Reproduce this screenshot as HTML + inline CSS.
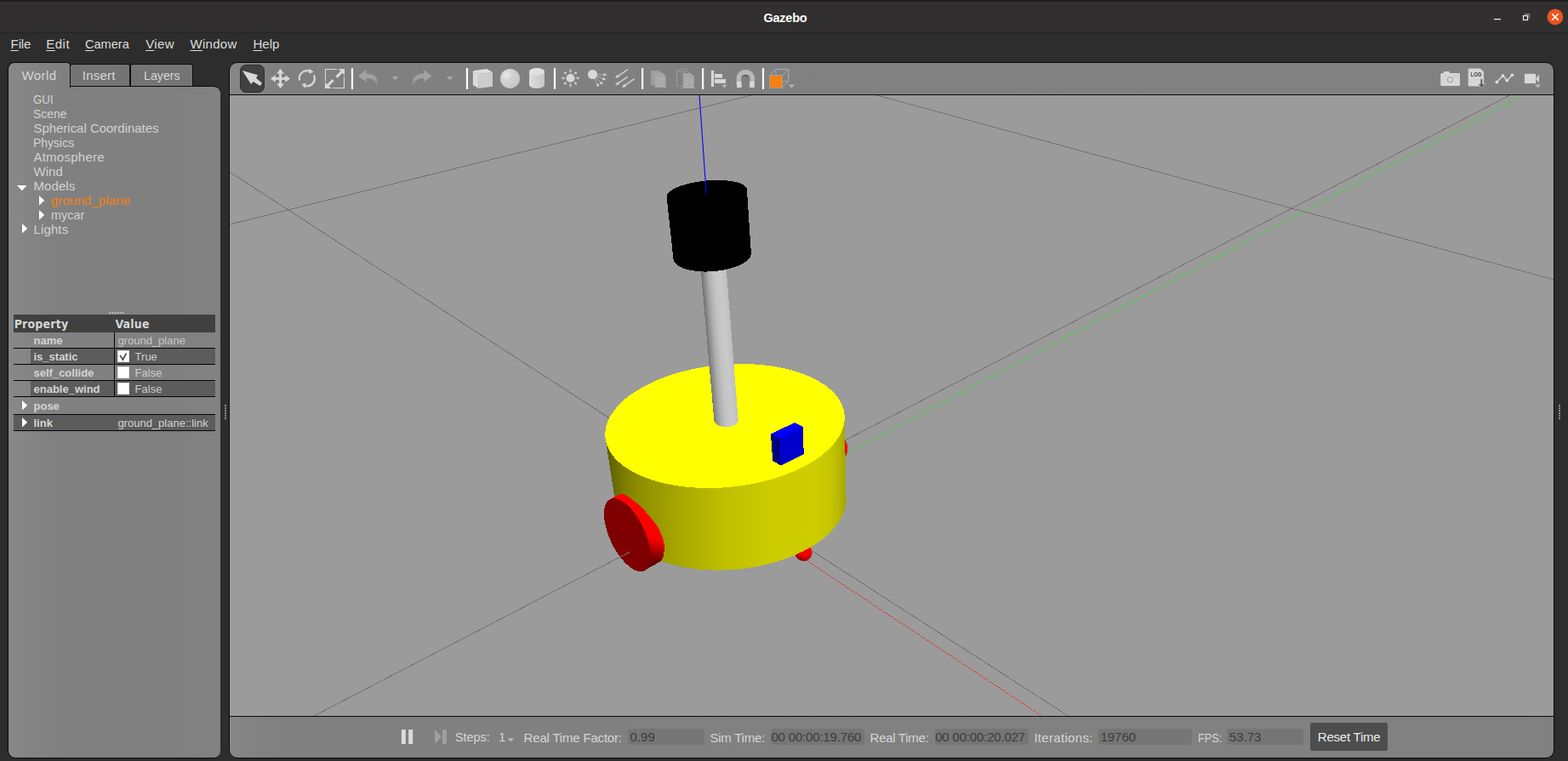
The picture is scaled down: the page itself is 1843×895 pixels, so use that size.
<!DOCTYPE html>
<html lang="en">
<head>
<meta charset="utf-8">
<title>Gazebo</title>
<style>
*{box-sizing:border-box;margin:0;padding:0}
html,body{width:1843px;height:895px;overflow:hidden;background:#2d2d2d}
body{position:relative;font-family:"Liberation Sans",sans-serif;font-size:15px;color:#d4d4d4}
.a{position:absolute;display:block}
.t{position:absolute;white-space:nowrap}
u{text-decoration:underline;text-underline-offset:1.5px;text-decoration-thickness:1px}
svg{overflow:visible}
</style>
</head>
<body>
<!-- window chrome -->
<div class="a" style="left:0px;top:0px;width:1843px;height:39px;background:#312f2f;border-top:2px solid #1e1e1e;border-bottom:1px solid #242424;"></div>
<div class="t" style="left:897.40px;top:12px;font-size:14.5px;line-height:18px;height:18px;color:#ffffff;font-weight:bold;letter-spacing:-0.215px;">Gazebo</div>
<svg class="a" style="left:1740px;top:2px" width="103" height="36" viewBox="1740 2 103 36">
<rect x="1756" y="22" width="8" height="1.2" fill="#f2f2f2"/>
<path d="M1792.5 16.5h5v5" fill="none" stroke="#9a9a9a" stroke-width="1"/>
<rect x="1790.5" y="18.5" width="5" height="5" fill="none" stroke="#f2f2f2" stroke-width="1.2"/>
<circle cx="1827.9" cy="19.9" r="9.4" fill="#e95420"/>
<path d="M1824.2 16.2l7.4 7.4M1831.6 16.2l-7.4 7.4" stroke="#fff" stroke-width="1.5" fill="none"/>
</svg>
<div class="t" style="left:12.60px;top:43px;font-size:15px;line-height:18px;height:18px;color:#dcdcdc;letter-spacing:-0.122px;"><u>F</u>ile</div>
<div class="t" style="left:54.30px;top:43px;font-size:15px;line-height:18px;height:18px;color:#dcdcdc;letter-spacing:0.485px;"><u>E</u>dit</div>
<div class="t" style="left:100.40px;top:43px;font-size:15px;line-height:18px;height:18px;color:#dcdcdc;transform:scaleX(0.9706);transform-origin:0 0;"><u>C</u>amera</div>
<div class="t" style="left:171.20px;top:43px;font-size:15px;line-height:18px;height:18px;color:#dcdcdc;letter-spacing:0.373px;"><u>V</u>iew</div>
<div class="t" style="left:223.40px;top:43px;font-size:15px;line-height:18px;height:18px;color:#dcdcdc;letter-spacing:0.323px;"><u>W</u>indow</div>
<div class="t" style="left:297.50px;top:43px;font-size:15px;line-height:18px;height:18px;color:#dcdcdc;letter-spacing:-0.018px;"><u>H</u>elp</div>
<div class="a" style="left:264px;top:476px;width:2px;height:2px;background:#8c8c8c;"></div>
<div class="a" style="left:264px;top:479px;width:2px;height:2px;background:#8c8c8c;"></div>
<div class="a" style="left:264px;top:482px;width:2px;height:2px;background:#8c8c8c;"></div>
<div class="a" style="left:264px;top:485px;width:2px;height:2px;background:#8c8c8c;"></div>
<div class="a" style="left:264px;top:488px;width:2px;height:2px;background:#8c8c8c;"></div>
<div class="a" style="left:264px;top:491px;width:2px;height:2px;background:#8c8c8c;"></div>
<div class="a" style="left:1832px;top:476px;width:2px;height:2px;background:#8c8c8c;"></div>
<div class="a" style="left:1832px;top:479px;width:2px;height:2px;background:#8c8c8c;"></div>
<div class="a" style="left:1832px;top:482px;width:2px;height:2px;background:#8c8c8c;"></div>
<div class="a" style="left:1832px;top:485px;width:2px;height:2px;background:#8c8c8c;"></div>
<div class="a" style="left:1832px;top:488px;width:2px;height:2px;background:#8c8c8c;"></div>
<div class="a" style="left:1832px;top:491px;width:2px;height:2px;background:#8c8c8c;"></div>
<!-- left panel -->
<div class="a" style="left:9px;top:101px;width:250px;height:791px;background:linear-gradient(90deg,#898989 0px,#858585 20px,#818181 45px,#808080 65px,#808080 200px,#828282 250px);border-left:1px solid #0c0c0c;border-bottom:1px solid #0c0c0c;border-top:1px solid #0c0c0c;border-radius:0 8px 8px 9px;"></div>
<div class="a" style="left:82px;top:75px;width:71px;height:27px;background:#747474;border:1px solid #0c0c0c;border-radius:3px 3px 0 0;"></div>
<div class="a" style="left:153px;top:75px;width:74px;height:27px;background:#747474;border:1px solid #0c0c0c;border-radius:3px 3px 0 0;"></div>
<div class="a" style="left:9px;top:73px;width:74px;height:30px;background:linear-gradient(90deg,#898989 0px,#858585 20px,#818181 45px,#808080 65px);border:1px solid #0c0c0c;border-bottom:none;border-radius:8px 4px 0 0;"></div>
<div class="t" style="left:25.50px;top:80px;font-size:15px;line-height:18px;height:18px;color:#d6d6d6;letter-spacing:0.401px;">World</div>
<div class="t" style="left:96.80px;top:80px;font-size:15px;line-height:18px;height:18px;color:#d6d6d6;letter-spacing:0.217px;">Insert</div>
<div class="t" style="left:168.70px;top:80px;font-size:15px;line-height:18px;height:18px;color:#d6d6d6;transform:scaleX(0.9486);transform-origin:0 0;">Layers</div>
<div class="t" style="left:39.40px;top:108px;font-size:15px;line-height:18px;height:18px;color:#d2d2d2;transform:scaleX(0.8849);transform-origin:0 0;">GUI</div>
<div class="t" style="left:39.40px;top:125px;font-size:15px;line-height:18px;height:18px;color:#d2d2d2;transform:scaleX(0.9265);transform-origin:0 0;">Scene</div>
<div class="t" style="left:39.40px;top:142px;font-size:15px;line-height:18px;height:18px;color:#d2d2d2;letter-spacing:-0.019px;">Spherical Coordinates</div>
<div class="t" style="left:39.40px;top:159px;font-size:15px;line-height:18px;height:18px;color:#d2d2d2;transform:scaleX(0.9328);transform-origin:0 0;">Physics</div>
<div class="t" style="left:39.40px;top:176px;font-size:15px;line-height:18px;height:18px;color:#d2d2d2;letter-spacing:0.258px;">Atmosphere</div>
<div class="t" style="left:39.40px;top:193px;font-size:15px;line-height:18px;height:18px;color:#d2d2d2;letter-spacing:0.077px;">Wind</div>
<div class="t" style="left:39.40px;top:210px;font-size:15px;line-height:18px;height:18px;color:#d2d2d2;letter-spacing:0.108px;">Models</div>
<div class="t" style="left:59.80px;top:227px;font-size:15px;line-height:18px;height:18px;color:#f58113;letter-spacing:0.140px;">ground_plane</div>
<div class="t" style="left:59.80px;top:244px;font-size:15px;line-height:18px;height:18px;color:#d2d2d2;transform:scaleX(0.9650);transform-origin:0 0;">mycar</div>
<div class="t" style="left:39.40px;top:261px;font-size:15px;line-height:18px;height:18px;color:#d2d2d2;letter-spacing:0.156px;">Lights</div>
<svg class="a" style="left:20.2px;top:217.8px" width="12.6" height="7.2"><polygon points="0,0 11.6,0 5.8,6.2" fill="#ffffff"/></svg>
<svg class="a" style="left:46px;top:229.5px" width="7.2" height="12.6"><polygon points="0,0 6.2,5.8 0,11.6" fill="#ffffff"/></svg>
<svg class="a" style="left:46px;top:246.5px" width="7.2" height="12.6"><polygon points="0,0 6.2,5.8 0,11.6" fill="#ffffff"/></svg>
<svg class="a" style="left:26px;top:263.3px" width="7.2" height="12.6"><polygon points="0,0 6.2,5.8 0,11.6" fill="#ffffff"/></svg>
<svg class="a" style="left:127px;top:366px" width="20" height="4" viewBox="127 366 20 4"><polygon points="128.80,367.1 130.40,367.1 129.70,368.9 128.10,368.9" fill="#c4c4c4"/><polygon points="131.88,367.1 133.48,367.1 132.78,368.9 131.18,368.9" fill="#c4c4c4"/><polygon points="134.96,367.1 136.56,367.1 135.86,368.9 134.26,368.9" fill="#c4c4c4"/><polygon points="138.04,367.1 139.64,367.1 138.94,368.9 137.34,368.9" fill="#c4c4c4"/><polygon points="141.12,367.1 142.72,367.1 142.02,368.9 140.42,368.9" fill="#c4c4c4"/><polygon points="144.20,367.1 145.80,367.1 145.10,368.9 143.50,368.9" fill="#c4c4c4"/></svg>
<div class="a" style="left:16px;top:370px;width:237px;height:21px;background:#404040;"></div>
<div class="t" style="left:16.70px;top:373px;font-size:14px;line-height:17px;height:17px;color:#d6d6d6;font-family:'DejaVu Sans Condensed','DejaVu Sans',sans-serif;font-weight:bold;letter-spacing:0.185px;">Property</div>
<div class="t" style="left:135.40px;top:373px;font-size:14px;line-height:17px;height:17px;color:#d6d6d6;font-family:'DejaVu Sans Condensed','DejaVu Sans',sans-serif;font-weight:bold;letter-spacing:0.197px;">Value</div>
<div class="a" style="left:36px;top:410px;width:217px;height:18px;background:#5c5c5c;"></div>
<div class="a" style="left:36px;top:448px;width:217px;height:18px;background:#5c5c5c;"></div>
<div class="a" style="left:16px;top:488px;width:237px;height:18px;background:#5c5c5c;"></div>
<div class="a" style="left:16px;top:409px;width:237px;height:1px;background:#050505;"></div>
<div class="a" style="left:16px;top:428px;width:237px;height:1px;background:#050505;"></div>
<div class="a" style="left:16px;top:447px;width:237px;height:1px;background:#050505;"></div>
<div class="a" style="left:16px;top:466px;width:237px;height:1px;background:#050505;"></div>
<div class="a" style="left:16px;top:487px;width:237px;height:1px;background:#050505;"></div>
<div class="a" style="left:16px;top:506px;width:237px;height:1px;background:#050505;"></div>
<div class="a" style="left:134px;top:391px;width:1px;height:75px;background:#050505;"></div>
<div class="t" style="left:39.50px;top:393px;font-size:13px;line-height:15px;height:15px;color:#d4d4d4;font-weight:bold;">name</div>
<div class="t" style="left:39.50px;top:412px;font-size:13px;line-height:15px;height:15px;color:#d4d4d4;font-weight:bold;">is_static</div>
<div class="t" style="left:39.50px;top:431px;font-size:13px;line-height:15px;height:15px;color:#d4d4d4;font-weight:bold;">self_collide</div>
<div class="t" style="left:39.50px;top:450px;font-size:13px;line-height:15px;height:15px;color:#d4d4d4;font-weight:bold;">enable_wind</div>
<div class="t" style="left:39.50px;top:470px;font-size:13px;line-height:15px;height:15px;color:#d4d4d4;font-weight:bold;">pose</div>
<div class="t" style="left:39.50px;top:490px;font-size:13px;line-height:15px;height:15px;color:#d4d4d4;font-weight:bold;">link</div>
<div class="t" style="left:138.40px;top:393px;font-size:13px;line-height:15px;height:15px;color:#c6c6c6;">ground_plane</div>
<div class="t" style="left:138.40px;top:490px;font-size:13px;line-height:15px;height:15px;color:#d2d2d2;">ground_plane::link</div>
<div class="a" style="left:138px;top:412px;width:14px;height:14px;background:#ffffff;border:1px solid #e0e0e0;"></div>
<div class="t" style="left:158.60px;top:412px;font-size:13px;line-height:15px;height:15px;color:#cccccc;">True</div>
<div class="a" style="left:138px;top:431px;width:14px;height:14px;background:#ffffff;border:1px solid #e0e0e0;"></div>
<div class="t" style="left:158.60px;top:431px;font-size:13px;line-height:15px;height:15px;color:#cccccc;">False</div>
<div class="a" style="left:138px;top:450px;width:14px;height:14px;background:#ffffff;border:1px solid #e0e0e0;"></div>
<div class="t" style="left:158.60px;top:450px;font-size:13px;line-height:15px;height:15px;color:#cccccc;">False</div>
<svg class="a" style="left:138px;top:412px" width="14" height="14"><path d="M3.1 5.9 L6.4 11 L10.5 3.4" fill="none" stroke="#4a4a4a" stroke-width="1.7"/></svg>
<svg class="a" style="left:26px;top:471.4px" width="7.2" height="12.6"><polygon points="0,0 6.2,5.8 0,11.6" fill="#ffffff"/></svg>
<svg class="a" style="left:26px;top:491.4px" width="7.2" height="12.6"><polygon points="0,0 6.2,5.8 0,11.6" fill="#ffffff"/></svg>
<!-- right panel -->
<div class="a" style="left:269px;top:73px;width:1558px;height:819px;background:linear-gradient(90deg,#878787 0px,#848484 18px,#818181 42px,#808080 65px,#818181 1558px);border:1px solid #0a0a0a;border-radius:10px;"></div>
<svg class="a" style="left:270px;top:74px" width="1556" height="37" viewBox="270 74 1556 37">
<defs>
<radialGradient id="gSph" cx="0.32" cy="0.32" r="0.75"><stop offset="0" stop-color="#ebebeb"/><stop offset="0.35" stop-color="#d4d4d4"/><stop offset="1" stop-color="#c4c4c4"/></radialGradient>
<linearGradient id="gCyl" x1="0" y1="0" x2="1" y2="0"><stop offset="0" stop-color="#e0e0e0"/><stop offset="0.5" stop-color="#d2d2d2"/><stop offset="1" stop-color="#c6c6c6"/></linearGradient>
<linearGradient id="gUndo" gradientUnits="userSpaceOnUse" x1="0" y1="92" x2="0" y2="102"><stop offset="0" stop-color="#a2a2a2"/><stop offset="1" stop-color="#a2a2a2" stop-opacity="0.1"/></linearGradient>
</defs>
<rect x="282.5" y="76.5" width="28" height="32" rx="6.5" fill="#414141" stroke="#2e2e2e" stroke-width="1"/>
<polygon points="284.9,82.9 303.1,88.3 301,91.8 308,97.7 305.7,101 297.7,96.1 295.1,99.1" fill="#d8d8d8"/>
<g fill="#d8d8d8"><rect x="328.1" y="84.45" width="2.8" height="16"/><rect x="321.5" y="91.05" width="16" height="2.8"/><polygon points="329.5,80.85000000000001 333.8,86.75 325.2,86.75"/><polygon points="329.5,104.05 333.8,98.15 325.2,98.15"/><polygon points="317.9,92.45 323.8,88.15 323.8,96.75"/><polygon points="341.1,92.45 335.2,88.15 335.2,96.75"/></g>
<g fill="#7b7b7b"><rect x="323.9" y="87.15" width="3.6" height="3.3"/><rect x="331.5" y="87.15" width="3.6" height="3.3"/><rect x="323.9" y="94.45" width="3.6" height="3.3"/><rect x="331.5" y="94.45" width="3.6" height="3.3"/></g>
<path d="M352.11 94.53 A9.0 9.0 0 0 1 363.13 83.51" fill="none" stroke="#d8d8d8" stroke-width="2.2"/>
<polygon points="368.6,84.4 363,80.4 363.3,86.7" fill="#d8d8d8"/>
<path d="M368.96 88.40 A9.0 9.0 0 0 1 359.08 101.03" fill="none" stroke="#d8d8d8" stroke-width="2.2"/>
<polygon points="354.8,98.7 359.8,97.7 358.4,103.9" fill="#d8d8d8"/>
<path d="M396 81.5 H382.5 V95.5 M391 103.5 H404.5 V90" fill="none" stroke="#d8d8d8" stroke-width="1.1"/>
<g fill="#d8d8d8"><polygon points="405,80.9 405,88.6 397.8,80.9"/><polygon points="381.9,104 381.9,96.4 389.4,104"/><polygon points="394.3,89.6 400.5,83.4 402.6,85.5 396.6,91.9"/><polygon points="392.7,95.2 386.4,101.6 384.3,99.5 390.4,93.0"/></g>
<rect x="412.9" y="80.2" width="2.2" height="24.7" fill="#ffffff"/>
<polygon points="421,89.3 430.4,82 430.4,96.2" fill="#a2a2a2"/>
<path d="M430 86.6 C437.5 86.4 443.5 90 443.8 96.5 C443.9 99 443.4 100.8 442.6 102.2 C442.6 96.6 439 91.6 430 91.9 Z" fill="url(#gUndo)"/>
<polygon points="460.7,90.1 468.1,90.1 464.4,94.19999999999999" fill="#a8a8a8"/>
<polygon points="507.7,89.3 498.3,82 498.3,96.2" fill="#a2a2a2"/>
<path d="M498.7 86.6 C491.2 86.4 485.2 90 484.9 96.5 C484.8 99 485.3 100.8 486.1 102.2 C486.1 96.6 489.7 91.6 498.7 91.9 Z" fill="url(#gUndo)"/>
<polygon points="524.8,90.1 532.2,90.1 528.5,94.19999999999999" fill="#a8a8a8"/>
<rect x="547.9" y="80.2" width="2.2" height="24.7" fill="#ffffff"/>
<polygon points="555.9,83.3 572.1,80.9 579,84.9 563,87" fill="#dfdfdf"/><polygon points="555.9,83.3 563,87 562.4,103.9 555.9,100" fill="#dadada"/><polygon points="563,87 579,84.9 579,101.8 562.4,103.9" fill="#cdcdcf"/>
<circle cx="599.5" cy="92.4" r="11.5" fill="url(#gSph)"/>
<path d="M622.1 84.2 V99.9 A8.95 4.1 0 0 0 640 99.9 V84.2 Z" fill="url(#gCyl)"/><ellipse cx="631.05" cy="84.2" rx="8.95" ry="4.1" fill="#e1e1e3"/>
<rect x="650.9" y="80.2" width="2.2" height="24.7" fill="#ffffff"/>
<circle cx="670.5" cy="91.9" r="4.9" fill="#d8d8d8"/>
<line x1="675.50" y1="91.90" x2="678.50" y2="91.90" stroke="#b4b4b4" stroke-width="0.8"/><polygon points="681.70,91.90 678.10,93.70 678.10,90.10" fill="#d0d0d0"/>
<line x1="674.04" y1="95.44" x2="676.16" y2="97.56" stroke="#b4b4b4" stroke-width="0.8"/><polygon points="678.42,99.82 674.60,98.55 677.15,96.00" fill="#d0d0d0"/>
<line x1="670.50" y1="96.90" x2="670.50" y2="99.90" stroke="#b4b4b4" stroke-width="0.8"/><polygon points="670.50,103.10 668.70,99.50 672.30,99.50" fill="#d0d0d0"/>
<line x1="666.96" y1="95.44" x2="664.84" y2="97.56" stroke="#b4b4b4" stroke-width="0.8"/><polygon points="662.58,99.82 663.85,96.00 666.40,98.55" fill="#d0d0d0"/>
<line x1="665.50" y1="91.90" x2="662.50" y2="91.90" stroke="#b4b4b4" stroke-width="0.8"/><polygon points="659.30,91.90 662.90,90.10 662.90,93.70" fill="#d0d0d0"/>
<line x1="666.96" y1="88.36" x2="664.84" y2="86.24" stroke="#b4b4b4" stroke-width="0.8"/><polygon points="662.58,83.98 666.40,85.25 663.85,87.80" fill="#d0d0d0"/>
<line x1="670.50" y1="86.90" x2="670.50" y2="83.90" stroke="#b4b4b4" stroke-width="0.8"/><polygon points="670.50,80.70 672.30,84.30 668.70,84.30" fill="#d0d0d0"/>
<line x1="674.04" y1="88.36" x2="676.16" y2="86.24" stroke="#b4b4b4" stroke-width="0.8"/><polygon points="678.42,83.98 677.15,87.80 674.60,85.25" fill="#d0d0d0"/>
<line x1="696.5" y1="87.5" x2="711.10" y2="87.93" stroke="#c0c0c0" stroke-width="0.8"/><polygon points="713.60,88.00 709.55,89.78 709.66,85.98" fill="#d4d4d4"/>
<line x1="696.5" y1="87.5" x2="709.88" y2="92.96" stroke="#c0c0c0" stroke-width="0.8"/><polygon points="712.20,93.90 707.78,94.15 709.21,90.63" fill="#d4d4d4"/>
<line x1="696.5" y1="87.5" x2="707.02" y2="97.85" stroke="#c0c0c0" stroke-width="0.8"/><polygon points="708.80,99.60 704.62,98.15 707.28,95.44" fill="#d4d4d4"/>
<line x1="696.5" y1="87.5" x2="702.71" y2="100.35" stroke="#c0c0c0" stroke-width="0.8"/><polygon points="703.80,102.60 700.35,99.83 703.77,98.17" fill="#d4d4d4"/>
<circle cx="696.5" cy="87.5" r="5.6" fill="#d8d8d8"/>
<line x1="737.7" y1="81.8" x2="725.48" y2="90.11" stroke="#d0d0d0" stroke-width="1.5"/><polygon points="723.00,91.80 725.62,87.48 727.98,90.95" fill="#d0d0d0"/>
<line x1="737.7" y1="90.3" x2="725.49" y2="98.52" stroke="#d0d0d0" stroke-width="1.5"/><polygon points="723.00,100.20 725.64,95.89 727.99,99.37" fill="#d0d0d0"/>
<line x1="745.8" y1="92.7" x2="733.47" y2="101.20" stroke="#d0d0d0" stroke-width="1.5"/><polygon points="731.00,102.90 733.60,98.56 735.98,102.02" fill="#d0d0d0"/>
<rect x="754.0" y="80.2" width="2.2" height="24.7" fill="#ffffff"/>
<g fill="#a2a2a2"><polygon points="764.9,82.9 774.6,82.9 778.5,86.5 778.5,100.3 764.9,100.3" fill="#9c9c9c"/><polygon points="769.5,85.7 778.6,85.7 782.6,89.6 782.6,103 769.5,103" fill="#a6a6a6"/></g>
<g stroke="#b6b6b6" stroke-width="0.5"><line x1="770.5" y1="91.5" x2="781.6" y2="91.5"/><line x1="770.5" y1="93.5" x2="781.6" y2="93.5"/><line x1="770.5" y1="95.5" x2="781.6" y2="95.5"/><line x1="770.5" y1="97.5" x2="781.6" y2="97.5"/><line x1="770.5" y1="99.5" x2="781.6" y2="99.5"/><line x1="770.5" y1="101.5" x2="781.6" y2="101.5"/></g>
<rect x="795.6" y="82.9" width="13.8" height="18.6" rx="1.6" fill="none" stroke="#a2a2a2" stroke-width="0.9"/><rect x="798.6" y="81.3" width="8.2" height="3.2" rx="1.5" fill="#808080" stroke="#a2a2a2" stroke-width="0.9"/>
<polygon points="802.7,85.9 811.8,85.9 815.9,89.9 815.9,104 802.7,104" fill="#a6a6a6"/>
<g stroke="#b6b6b6" stroke-width="0.5"><line x1="803.7" y1="92.5" x2="814.9" y2="92.5"/><line x1="803.7" y1="94.5" x2="814.9" y2="94.5"/><line x1="803.7" y1="96.5" x2="814.9" y2="96.5"/><line x1="803.7" y1="98.5" x2="814.9" y2="98.5"/><line x1="803.7" y1="100.5" x2="814.9" y2="100.5"/><line x1="803.7" y1="102.5" x2="814.9" y2="102.5"/></g>
<rect x="825.0" y="80.2" width="2.2" height="24.7" fill="#ffffff"/>
<g fill="#d8d8d8"><rect x="835.9" y="82.9" width="3.1" height="19.1"/><rect x="839.9" y="87" width="9.1" height="4.6"/><rect x="839.9" y="93.1" width="13.2" height="4.8"/></g>
<polygon points="847.7,99.6 855.1,99.6 851.4,103.5" fill="#b4b4b4"/>
<path d="M869.2 102.9 C868.6 99.5 868.3 96 868.3 92.7 A8.05 8.05 0 0 1 884.4 92.7 C884.4 96 884.1 99.5 883.6 102.9" fill="none" stroke="#b8b8b8" stroke-width="5.5"/>
<path d="M869.2 102.9 C868.9 100.6 868.6 98.2 868.45 95.9 M884.25 95.9 C884.1 98.2 883.9 100.6 883.6 102.9" fill="none" stroke="#d8d8d8" stroke-width="5.5"/>
<path d="M871.9 89.9 C873.6 88.2 879.1 88.2 880.8 89.9 C879 89.2 873.7 89.2 871.9 89.9 Z" fill="#4a4a4a" stroke="#5a5a5a" stroke-width="0.5"/>
<rect x="895.9" y="80.2" width="2.2" height="24.7" fill="#ffffff"/>
<g fill="none" stroke="#bdbdbd" stroke-width="0.8"><path d="M911.9 81.4 H925.4 Q926.8 81.4 926.8 82.8 V95.7 M904.9 88.6 L911.9 81.4 M919.3 88.6 L926.6 81.6 M919.3 102.8 L926.8 95.7"/><path d="M911.9 81.4 V88.5 M919.5 95.7 H926.8" stroke="#9a9a9a" stroke-width="1.4"/></g>
<rect x="904.8" y="88.8" width="14.4" height="14.2" fill="#f58113"/><rect x="904.4" y="88.4" width="15.2" height="15" fill="none" stroke="#a9b4bf" stroke-width="0.6"/>
<polygon points="926.7,99.4 934.1,99.4 930.4,103.5" fill="#b4b4b4"/>
<rect x="1693.2" y="85.9" width="22.8" height="15" rx="1.6" fill="#d6d6d6"/><rect x="1696.9" y="84" width="6.7" height="3" rx="0.8" fill="#d6d6d6"/>
<circle cx="1704.4" cy="93.7" r="3.1" fill="#dadada" stroke="#8c8c8c" stroke-width="0.9"/><rect x="1709.2" y="88.5" width="4.6" height="2" fill="#dcdcdc" stroke="#bcbcbc" stroke-width="0.5"/><circle cx="1699.2" cy="89.2" r="0.7" fill="#b0b0b0"/>
<polygon points="1726.1,80.9 1739.8,80.9 1743.7,84.4 1743.7,101.1 1726.1,101.1" fill="#d6d6d6" stroke="#e2e2e2" stroke-width="0.6"/>
<text x="1728.6" y="89.9" font-family="Liberation Sans, sans-serif" font-weight="bold" font-size="6.9" fill="#3e3e3e" textLength="12.6" lengthAdjust="spacingAndGlyphs">LOG</text>
<path d="M1740 92.7 H1742.6 V98.8 H1746 L1741.3 103.6 L1737.2 98.8 H1740 Z" fill="#5e5e5e" stroke="#dadada" stroke-width="0.6"/>
<polyline points="1759.3,96.6 1766.5,89 1771.3,94.8 1777.4,88.3" fill="none" stroke="#dedede" stroke-width="1.4"/><circle cx="1759.3" cy="96.6" r="1.8" fill="#e2e2e2"/><circle cx="1766.5" cy="89" r="1.8" fill="#e2e2e2"/><circle cx="1771.3" cy="94.8" r="1.8" fill="#e2e2e2"/><circle cx="1777.4" cy="88.3" r="1.8" fill="#e2e2e2"/>
<rect x="1791.9" y="86.8" width="13.2" height="11.3" fill="#d8d8d8"/><polygon points="1805.1,92.4 1809,87.7 1809,97.2" fill="#d8d8d8"/>
<polygon points="1803.8,99.4 1811.2,99.4 1807.5,103.5" fill="#b4b4b4"/>
</svg>
<svg class="a" style="left:270px;top:112px;overflow:hidden" width="1556" height="730" viewBox="270 112 1556 730">
<defs>
<linearGradient id="gSide" gradientUnits="userSpaceOnUse" x1="711" y1="0" x2="996" y2="0">
<stop offset="0" stop-color="#5a5a00"/><stop offset="0.04" stop-color="#6a6a00"/><stop offset="0.085" stop-color="#7f7f00"/><stop offset="0.14" stop-color="#8e8e00"/><stop offset="0.22" stop-color="#9a9a00"/><stop offset="0.35" stop-color="#adad00"/><stop offset="0.5" stop-color="#c0c000"/><stop offset="0.68" stop-color="#cbcb00"/><stop offset="0.86" stop-color="#cdcd00"/><stop offset="0.93" stop-color="#c6c600"/><stop offset="0.97" stop-color="#b4b400"/><stop offset="1" stop-color="#9e9e00"/>
</linearGradient>
<linearGradient id="gPole" gradientUnits="userSpaceOnUse" x1="824" y1="0" x2="854" y2="0" gradientTransform="matrix(1 0 0.082 1 -25.9 0)">
<stop offset="0" stop-color="#707070"/><stop offset="0.1" stop-color="#8a8a8a"/><stop offset="0.28" stop-color="#aeaeae"/><stop offset="0.5" stop-color="#c4c4c4"/><stop offset="0.75" stop-color="#c9c9c9"/><stop offset="1" stop-color="#bebebe"/>
</linearGradient>
<linearGradient id="gRim" gradientUnits="userSpaceOnUse" x1="779" y1="632" x2="772" y2="664">
<stop offset="0" stop-color="#ff0000"/><stop offset="0.22" stop-color="#ea0000"/><stop offset="0.48" stop-color="#b60000"/><stop offset="0.74" stop-color="#840000"/><stop offset="1" stop-color="#5a0000"/>
</linearGradient>
<radialGradient id="gBall" cx="0.62" cy="0.28" r="0.8"><stop offset="0" stop-color="#ff0000"/><stop offset="0.45" stop-color="#f40000"/><stop offset="0.75" stop-color="#b80000"/><stop offset="1" stop-color="#600000"/></radialGradient>
</defs>
<rect x="270" y="112" width="1556" height="730" fill="#9b9b9b"/>
<g fill="none" stroke="#727272" stroke-width="1" shape-rendering="crispEdges">
<line x1="269" y1="264.1" x2="886" y2="111.3"/>
<line x1="269" y1="201.6" x2="716" y2="491.6"/>
<line x1="1028" y1="111.3" x2="1827" y2="329"/>
<line x1="1776.4" y1="111" x2="993" y2="518"/>
<line x1="368" y1="842.5" x2="740" y2="649.3"/>
<line x1="950" y1="645" x2="1257" y2="843"/>
</g>
<path d="M994 533h1v1h-1zM996 532h1v1h-1zM998 531h1v1h-1zM1000 530h1v1h-1zM1002 529h1v1h-1zM1004 528h1v1h-1zM1006 527h1v1h-1zM1008 526h1v1h-1zM1010 525h1v1h-1zM1012 523h1v1h-1zM1014 522h1v1h-1zM1016 521h1v1h-1zM1018 520h1v1h-1zM1020 519h1v1h-1zM1022 518h1v1h-1zM1024 517h1v1h-1zM1026 516h1v1h-1zM1028 515h1v1h-1zM1030 514h1v1h-1zM1032 513h1v1h-1zM1034 512h1v1h-1zM1036 511h1v1h-1zM1038 510h1v1h-1zM1040 509h1v1h-1zM1042 508h1v1h-1zM1044 507h1v1h-1zM1046 505h1v1h-1zM1048 504h1v1h-1zM1050 503h1v1h-1zM1052 502h1v1h-1zM1054 501h1v1h-1zM1056 500h1v1h-1zM1058 499h1v1h-1zM1060 498h1v1h-1zM1062 497h1v1h-1zM1064 496h1v1h-1zM1066 495h1v1h-1zM1068 494h1v1h-1zM1070 493h1v1h-1zM1072 492h1v1h-1zM1074 491h1v1h-1zM1076 490h1v1h-1zM1078 489h1v1h-1zM1080 487h1v1h-1zM1082 486h1v1h-1zM1084 485h1v1h-1zM1086 484h1v1h-1zM1088 483h1v1h-1zM1090 482h1v1h-1zM1092 481h1v1h-1zM1094 480h1v1h-1zM1096 479h1v1h-1zM1098 478h1v1h-1zM1100 477h1v1h-1zM1102 476h1v1h-1zM1104 475h1v1h-1zM1106 474h1v1h-1zM1108 473h1v1h-1zM1110 472h1v1h-1zM1112 471h1v1h-1zM1114 469h1v1h-1zM1116 468h1v1h-1zM1118 467h1v1h-1zM1120 466h1v1h-1zM1122 465h1v1h-1zM1124 464h1v1h-1zM1126 463h1v1h-1zM1128 462h1v1h-1zM1130 461h1v1h-1zM1132 460h1v1h-1zM1134 459h1v1h-1zM1136 458h1v1h-1zM1138 457h1v1h-1zM1140 456h1v1h-1zM1142 455h1v1h-1zM1144 454h1v1h-1zM1146 453h1v1h-1zM1148 451h1v1h-1zM1150 450h1v1h-1zM1152 449h1v1h-1zM1154 448h1v1h-1zM1156 447h1v1h-1zM1158 446h1v1h-1zM1160 445h1v1h-1zM1162 444h1v1h-1zM1164 443h1v1h-1zM1166 442h1v1h-1zM1168 441h1v1h-1zM1170 440h1v1h-1zM1172 439h1v1h-1zM1174 438h1v1h-1zM1176 437h1v1h-1zM1178 436h1v1h-1zM1180 435h1v1h-1zM1182 433h1v1h-1zM1184 432h1v1h-1zM1186 431h1v1h-1zM1188 430h1v1h-1zM1190 429h1v1h-1zM1192 428h1v1h-1zM1194 427h1v1h-1zM1196 426h1v1h-1zM1198 425h1v1h-1zM1200 424h1v1h-1zM1202 423h1v1h-1zM1204 422h1v1h-1zM1206 421h1v1h-1zM1208 420h1v1h-1zM1210 419h1v1h-1zM1212 418h1v1h-1zM1214 416h1v1h-1zM1216 415h1v1h-1zM1218 414h1v1h-1zM1220 413h1v1h-1zM1222 412h1v1h-1zM1224 411h1v1h-1zM1226 410h1v1h-1zM1228 409h1v1h-1zM1230 408h1v1h-1zM1232 407h1v1h-1zM1234 406h1v1h-1zM1236 405h1v1h-1zM1238 404h1v1h-1zM1240 403h1v1h-1zM1242 402h1v1h-1zM1244 401h1v1h-1zM1246 400h1v1h-1zM1248 398h1v1h-1zM1250 397h1v1h-1zM1252 396h1v1h-1zM1254 395h1v1h-1zM1256 394h1v1h-1zM1258 393h1v1h-1zM1260 392h1v1h-1zM1262 391h1v1h-1zM1264 390h1v1h-1zM1266 389h1v1h-1zM1268 388h1v1h-1zM1270 387h1v1h-1zM1272 386h1v1h-1zM1274 385h1v1h-1zM1276 384h1v1h-1zM1278 383h1v1h-1zM1280 382h1v1h-1zM1282 380h1v1h-1zM1284 379h1v1h-1zM1286 378h1v1h-1zM1288 377h1v1h-1zM1290 376h1v1h-1zM1292 375h1v1h-1zM1294 374h1v1h-1zM1296 373h1v1h-1zM1298 372h1v1h-1zM1300 371h1v1h-1zM1302 370h1v1h-1zM1304 369h1v1h-1zM1306 368h1v1h-1zM1308 367h1v1h-1zM1310 366h1v1h-1zM1312 365h1v1h-1zM1314 364h1v1h-1zM1316 362h1v1h-1zM1318 361h1v1h-1zM1320 360h1v1h-1zM1322 359h1v1h-1zM1324 358h1v1h-1zM1326 357h1v1h-1zM1328 356h1v1h-1zM1330 355h1v1h-1zM1332 354h1v1h-1zM1334 353h1v1h-1zM1336 352h1v1h-1zM1338 351h1v1h-1zM1340 350h1v1h-1zM1342 349h1v1h-1zM1344 348h1v1h-1zM1346 347h1v1h-1zM1348 346h1v1h-1zM1350 344h1v1h-1zM1352 343h1v1h-1zM1354 342h1v1h-1zM1356 341h1v1h-1zM1358 340h1v1h-1zM1360 339h1v1h-1zM1362 338h1v1h-1zM1364 337h1v1h-1zM1366 336h1v1h-1zM1368 335h1v1h-1zM1370 334h1v1h-1zM1372 333h1v1h-1zM1374 332h1v1h-1zM1376 331h1v1h-1zM1378 330h1v1h-1zM1380 329h1v1h-1zM1382 327h1v1h-1zM1384 326h1v1h-1zM1386 325h1v1h-1zM1388 324h1v1h-1zM1390 323h1v1h-1zM1392 322h1v1h-1zM1394 321h1v1h-1zM1396 320h1v1h-1zM1398 319h1v1h-1zM1400 318h1v1h-1zM1402 317h1v1h-1zM1404 316h1v1h-1zM1406 315h1v1h-1zM1408 314h1v1h-1zM1410 313h1v1h-1zM1412 312h1v1h-1zM1414 311h1v1h-1zM1416 309h1v1h-1zM1418 308h1v1h-1zM1420 307h1v1h-1zM1422 306h1v1h-1zM1424 305h1v1h-1zM1426 304h1v1h-1zM1428 303h1v1h-1zM1430 302h1v1h-1zM1432 301h1v1h-1zM1434 300h1v1h-1zM1436 299h1v1h-1zM1438 298h1v1h-1zM1440 297h1v1h-1zM1442 296h1v1h-1zM1444 295h1v1h-1zM1446 294h1v1h-1zM1448 293h1v1h-1zM1450 291h1v1h-1zM1452 290h1v1h-1zM1454 289h1v1h-1zM1456 288h1v1h-1zM1458 287h1v1h-1zM1460 286h1v1h-1zM1462 285h1v1h-1zM1464 284h1v1h-1zM1466 283h1v1h-1zM1468 282h1v1h-1zM1470 281h1v1h-1zM1472 280h1v1h-1zM1474 279h1v1h-1zM1476 278h1v1h-1zM1478 277h1v1h-1zM1480 276h1v1h-1zM1482 275h1v1h-1zM1484 273h1v1h-1zM1486 272h1v1h-1zM1488 271h1v1h-1zM1490 270h1v1h-1zM1492 269h1v1h-1zM1494 268h1v1h-1zM1496 267h1v1h-1zM1498 266h1v1h-1zM1500 265h1v1h-1zM1502 264h1v1h-1zM1504 263h1v1h-1zM1506 262h1v1h-1zM1508 261h1v1h-1zM1510 260h1v1h-1zM1512 259h1v1h-1zM1514 258h1v1h-1zM1516 257h1v1h-1zM1518 255h1v1h-1zM1520 254h1v1h-1zM1522 253h1v1h-1zM1524 252h1v1h-1zM1526 251h1v1h-1zM1528 250h1v1h-1zM1530 249h1v1h-1zM1532 248h1v1h-1zM1534 247h1v1h-1zM1536 246h1v1h-1zM1538 245h1v1h-1zM1540 244h1v1h-1zM1542 243h1v1h-1zM1544 242h1v1h-1zM1546 241h1v1h-1zM1548 240h1v1h-1zM1550 238h1v1h-1zM1552 237h1v1h-1zM1554 236h1v1h-1zM1556 235h1v1h-1zM1558 234h1v1h-1zM1560 233h1v1h-1zM1562 232h1v1h-1zM1564 231h1v1h-1zM1566 230h1v1h-1zM1568 229h1v1h-1zM1570 228h1v1h-1zM1572 227h1v1h-1zM1574 226h1v1h-1zM1576 225h1v1h-1zM1578 224h1v1h-1zM1580 223h1v1h-1zM1582 222h1v1h-1zM1584 220h1v1h-1zM1586 219h1v1h-1zM1588 218h1v1h-1zM1590 217h1v1h-1zM1592 216h1v1h-1zM1594 215h1v1h-1zM1596 214h1v1h-1zM1598 213h1v1h-1zM1600 212h1v1h-1zM1602 211h1v1h-1zM1604 210h1v1h-1zM1606 209h1v1h-1zM1608 208h1v1h-1zM1610 207h1v1h-1zM1612 206h1v1h-1zM1614 205h1v1h-1zM1616 204h1v1h-1zM1618 202h1v1h-1zM1620 201h1v1h-1zM1622 200h1v1h-1zM1624 199h1v1h-1zM1626 198h1v1h-1zM1628 197h1v1h-1zM1630 196h1v1h-1zM1632 195h1v1h-1zM1634 194h1v1h-1zM1636 193h1v1h-1zM1638 192h1v1h-1zM1640 191h1v1h-1zM1642 190h1v1h-1zM1644 189h1v1h-1zM1646 188h1v1h-1zM1648 187h1v1h-1zM1650 186h1v1h-1zM1652 184h1v1h-1zM1654 183h1v1h-1zM1656 182h1v1h-1zM1658 181h1v1h-1zM1660 180h1v1h-1zM1662 179h1v1h-1zM1664 178h1v1h-1zM1666 177h1v1h-1zM1668 176h1v1h-1zM1670 175h1v1h-1zM1672 174h1v1h-1zM1674 173h1v1h-1zM1676 172h1v1h-1zM1678 171h1v1h-1zM1680 170h1v1h-1zM1682 169h1v1h-1zM1684 168h1v1h-1zM1686 166h1v1h-1zM1688 165h1v1h-1zM1690 164h1v1h-1zM1692 163h1v1h-1zM1694 162h1v1h-1zM1696 161h1v1h-1zM1698 160h1v1h-1zM1700 159h1v1h-1zM1702 158h1v1h-1zM1704 157h1v1h-1zM1706 156h1v1h-1zM1708 155h1v1h-1zM1710 154h1v1h-1zM1712 153h1v1h-1zM1714 152h1v1h-1zM1716 151h1v1h-1zM1718 149h1v1h-1zM1720 148h1v1h-1zM1722 147h1v1h-1zM1724 146h1v1h-1zM1726 145h1v1h-1zM1728 144h1v1h-1zM1730 143h1v1h-1zM1732 142h1v1h-1zM1734 141h1v1h-1zM1736 140h1v1h-1zM1738 139h1v1h-1zM1740 138h1v1h-1zM1742 137h1v1h-1zM1744 136h1v1h-1zM1746 135h1v1h-1zM1748 134h1v1h-1zM1750 133h1v1h-1zM1752 131h1v1h-1zM1754 130h1v1h-1zM1756 129h1v1h-1zM1758 128h1v1h-1zM1760 127h1v1h-1zM1762 126h1v1h-1zM1764 125h1v1h-1zM1766 124h1v1h-1zM1768 123h1v1h-1zM1770 122h1v1h-1zM1772 121h1v1h-1zM1774 120h1v1h-1zM1776 119h1v1h-1zM1778 118h1v1h-1zM1780 117h1v1h-1zM1782 116h1v1h-1zM1784 115h1v1h-1zM1786 113h1v1h-1zM1788 112h1v1h-1zM1790 111h1v1h-1zM1792 110h1v1h-1z" fill="#00ff00" shape-rendering="crispEdges"/>
<path d="M946 658h1v1h-1zM948 659h1v1h-1zM950 660h1v1h-1zM952 662h1v1h-1zM954 663h1v1h-1zM956 664h1v1h-1zM958 666h1v1h-1zM960 667h1v1h-1zM962 668h1v1h-1zM964 670h1v1h-1zM966 671h1v1h-1zM968 672h1v1h-1zM970 674h1v1h-1zM972 675h1v1h-1zM974 676h1v1h-1zM976 678h1v1h-1zM978 679h1v1h-1zM980 680h1v1h-1zM982 682h1v1h-1zM984 683h1v1h-1zM986 684h1v1h-1zM988 686h1v1h-1zM990 687h1v1h-1zM992 688h1v1h-1zM994 690h1v1h-1zM996 691h1v1h-1zM998 692h1v1h-1zM1000 694h1v1h-1zM1002 695h1v1h-1zM1004 696h1v1h-1zM1006 697h1v1h-1zM1008 699h1v1h-1zM1010 700h1v1h-1zM1012 701h1v1h-1zM1014 703h1v1h-1zM1016 704h1v1h-1zM1018 705h1v1h-1zM1020 707h1v1h-1zM1022 708h1v1h-1zM1024 709h1v1h-1zM1026 711h1v1h-1zM1028 712h1v1h-1zM1030 713h1v1h-1zM1032 715h1v1h-1zM1034 716h1v1h-1zM1036 717h1v1h-1zM1038 719h1v1h-1zM1040 720h1v1h-1zM1042 721h1v1h-1zM1044 723h1v1h-1zM1046 724h1v1h-1zM1048 725h1v1h-1zM1050 727h1v1h-1zM1052 728h1v1h-1zM1054 729h1v1h-1zM1056 731h1v1h-1zM1058 732h1v1h-1zM1060 733h1v1h-1zM1062 734h1v1h-1zM1064 736h1v1h-1zM1066 737h1v1h-1zM1068 738h1v1h-1zM1070 740h1v1h-1zM1072 741h1v1h-1zM1074 742h1v1h-1zM1076 744h1v1h-1zM1078 745h1v1h-1zM1080 746h1v1h-1zM1082 748h1v1h-1zM1084 749h1v1h-1zM1086 750h1v1h-1zM1088 752h1v1h-1zM1090 753h1v1h-1zM1092 754h1v1h-1zM1094 756h1v1h-1zM1096 757h1v1h-1zM1098 758h1v1h-1zM1100 760h1v1h-1zM1102 761h1v1h-1zM1104 762h1v1h-1zM1106 764h1v1h-1zM1108 765h1v1h-1zM1110 766h1v1h-1zM1112 768h1v1h-1zM1114 769h1v1h-1zM1116 770h1v1h-1zM1118 771h1v1h-1zM1120 773h1v1h-1zM1122 774h1v1h-1zM1124 775h1v1h-1zM1126 777h1v1h-1zM1128 778h1v1h-1zM1130 779h1v1h-1zM1132 781h1v1h-1zM1134 782h1v1h-1zM1136 783h1v1h-1zM1138 785h1v1h-1zM1140 786h1v1h-1zM1142 787h1v1h-1zM1144 789h1v1h-1zM1146 790h1v1h-1zM1148 791h1v1h-1zM1150 793h1v1h-1zM1152 794h1v1h-1zM1154 795h1v1h-1zM1156 797h1v1h-1zM1158 798h1v1h-1zM1160 799h1v1h-1zM1162 801h1v1h-1zM1164 802h1v1h-1zM1166 803h1v1h-1zM1168 805h1v1h-1zM1170 806h1v1h-1zM1172 807h1v1h-1zM1174 808h1v1h-1zM1176 810h1v1h-1zM1178 811h1v1h-1zM1180 812h1v1h-1zM1182 814h1v1h-1zM1184 815h1v1h-1zM1186 816h1v1h-1zM1188 818h1v1h-1zM1190 819h1v1h-1zM1192 820h1v1h-1zM1194 822h1v1h-1zM1196 823h1v1h-1zM1198 824h1v1h-1zM1200 826h1v1h-1zM1202 827h1v1h-1zM1204 828h1v1h-1zM1206 830h1v1h-1zM1208 831h1v1h-1zM1210 832h1v1h-1zM1212 834h1v1h-1zM1214 835h1v1h-1zM1216 836h1v1h-1zM1218 838h1v1h-1zM1220 839h1v1h-1zM1222 840h1v1h-1zM1224 842h1v1h-1zM1226 843h1v1h-1z" fill="#ff0000" shape-rendering="crispEdges"/>
<g shape-rendering="crispEdges">
<ellipse cx="992.3" cy="527.8" rx="3.9" ry="10.2" fill="#f00000"/>
</g>
<circle cx="944.5" cy="650" r="10" fill="url(#gBall)"/>
<g shape-rendering="crispEdges">
<polygon points="711.3,508.2 712.3,501.9 714.4,495.5 717.5,489.2 721.6,482.9 726.7,476.8 732.8,470.9 739.8,465.2 747.7,459.8 756.3,454.7 765.7,450.0 775.7,445.6 786.3,441.7 797.4,438.2 808.9,435.2 820.8,432.7 832.9,430.7 845.1,429.2 857.4,428.3 869.6,428.0 881.7,428.2 893.6,428.9 905.2,430.2 916.3,432.1 927.0,434.4 937.1,437.3 946.6,440.7 955.3,444.5 963.2,448.7 970.4,453.4 976.6,458.4 981.8,463.7 986.1,469.3 989.3,475.2 991.5,481.3 992.6,487.5 994.5,583.3 994.6,589.7 993.7,596.2 991.7,602.7 988.8,609.1 984.9,615.5 980.0,621.6 974.3,627.6 967.6,633.4 960.2,638.9 952.0,644.0 943.0,648.8 933.5,653.2 923.4,657.1 912.8,660.6 901.8,663.6 890.5,666.1 879.0,668.1 867.4,669.5 855.6,670.3 843.9,670.6 832.4,670.3 821.0,669.5 810.0,668.1 799.3,666.1 789.1,663.6 779.5,660.6 770.4,657.1 762.0,653.2 754.4,648.8 747.6,644.0 741.7,638.9 736.6,633.4 732.5,627.6 729.4,621.6 727.2,615.5 726.1,609.1 711.4,514.5" fill="url(#gSide)"/>
<path d="M718.1 586.5C718.8 586.2 720.9 585.2 722.3 584.5C723.6 583.8 725.0 582.9 726.2 582.3C727.4 581.7 728.3 581.2 729.4 581.0C730.5 580.8 731.7 580.8 732.9 581.1C734.1 581.5 735.6 582.4 736.8 583.1C738.0 583.9 738.6 584.6 740.1 585.6C741.6 586.6 743.5 587.7 745.7 589.4C747.9 591.1 751.2 593.6 753.5 595.9C755.8 598.1 757.5 600.3 759.7 602.9C762.0 605.5 765.0 608.8 767.0 611.3C769.0 613.8 770.6 616.0 772.0 618.0C773.4 620.0 774.0 621.4 775.1 623.6C776.2 625.8 777.7 628.9 778.6 631.4C779.5 633.9 780.1 636.8 780.5 638.8C780.9 640.8 780.9 641.2 780.8 643.7C780.7 646.2 780.5 650.8 779.9 653.5C779.3 656.2 777.8 658.7 777.4 659.7 L757.7 670.7 L754 672 L737 628 Z" fill="url(#gRim)"/>
<polygon points="757.3,671.3 755.6,671.9 753.8,672.2 751.8,672.1 749.7,671.8 747.6,671.1 745.3,670.1 743.0,668.8 740.7,667.1 738.3,665.2 735.9,663.0 733.5,660.6 731.2,657.9 728.9,655.0 726.6,651.9 724.5,648.6 722.4,645.2 720.5,641.7 718.7,638.0 717.0,634.3 715.5,630.6 714.2,626.8 713.0,623.1 712.0,619.4 711.2,615.8 710.6,612.3 710.2,608.9 710.0,605.7 710.0,602.6 710.3,599.8 710.7,597.2 711.3,594.8 712.2,592.7 713.2,590.8 714.4,589.3 715.8,588.0 717.3,587.1 719.0,586.5 720.8,586.2 722.8,586.3 724.9,586.6 727.0,587.3 729.3,588.3 731.6,589.6 733.9,591.3 736.3,593.2 738.7,595.4 741.1,597.8 743.4,600.5 745.7,603.4 748.0,606.5 750.1,609.8 752.2,613.2 754.1,616.7 755.9,620.4 757.6,624.1 759.1,627.8 760.4,631.6 761.6,635.3 762.6,639.0 763.4,642.6 764.0,646.1 764.4,649.5 764.6,652.7 764.6,655.8 764.3,658.6 763.9,661.2 763.3,663.6 762.4,665.7 761.4,667.6 760.2,669.1 758.8,670.4 757.3,671.3" fill="#7f0000"/>
</g>
<line x1="723" y1="658.1" x2="740" y2="649.3" stroke="#6c6c6c" stroke-width="1" shape-rendering="crispEdges"/>
<g shape-rendering="crispEdges">
<polygon points="992.6,487.5 992.7,493.8 991.7,500.1 989.6,506.5 986.5,512.8 982.4,519.1 977.3,525.2 971.2,531.1 964.2,536.8 956.3,542.2 947.7,547.3 938.3,552.0 928.3,556.4 917.7,560.3 906.6,563.8 895.1,566.8 883.2,569.3 871.1,571.3 858.9,572.8 846.6,573.7 834.4,574.0 822.3,573.8 810.4,573.1 798.8,571.8 787.7,569.9 777.0,567.6 766.9,564.7 757.4,561.3 748.7,557.5 740.8,553.3 733.6,548.6 727.4,543.6 722.2,538.3 717.9,532.7 714.7,526.8 712.5,520.7 711.4,514.5 711.3,508.2 712.3,501.9 714.4,495.5 717.5,489.2 721.6,482.9 726.7,476.8 732.8,470.9 739.8,465.2 747.7,459.8 756.3,454.7 765.7,450.0 775.7,445.6 786.3,441.7 797.4,438.2 808.9,435.2 820.8,432.7 832.9,430.7 845.1,429.2 857.4,428.3 869.6,428.0 881.7,428.2 893.6,428.9 905.2,430.2 916.3,432.1 927.0,434.4 937.1,437.3 946.6,440.7 955.3,444.5 963.2,448.7 970.4,453.4 976.6,458.4 981.8,463.7 986.1,469.3 989.3,475.2 991.5,481.3 992.6,487.5" fill="#ffff00"/>
<polygon points="906,510.4 933.8,497.1 943.9,501.7 916.1,516.3" fill="#0000ff"/>
<polygon points="916.1,516 943.9,501.7 944.7,534.1 917.8,547.6" fill="#0000cc"/>
<polygon points="906,510.4 916.3,516 918,547.6 908.2,542" fill="#000080"/>
<polygon points="823.5,315.0 853.6,315.0 867.7,494.0 867.7,494.0 867.6,495.1 867.2,496.1 866.6,497.1 865.8,498.1 864.8,499.0 863.5,499.8 862.1,500.5 860.6,501.1 858.9,501.6 857.2,501.9 855.4,502.1 853.5,502.2 851.6,502.1 849.8,501.9 848.1,501.6 846.4,501.1 844.9,500.5 843.5,499.8 842.2,499.0 841.2,498.1 840.4,497.1 839.8,496.1 839.4,495.1 839.3,494.0 839.3,494.0" fill="url(#gPole)"/>
<polygon points="783.6,231.8 783.6,230.5 784.0,229.2 784.8,227.9 785.9,226.5 787.4,225.2 789.2,223.9 791.3,222.6 793.7,221.3 796.4,220.1 799.3,218.9 802.5,217.8 805.9,216.8 809.5,215.9 813.3,215.0 817.2,214.2 821.2,213.6 825.2,213.0 829.3,212.6 833.4,212.2 837.5,212.0 841.6,211.9 845.6,211.9 849.4,212.0 853.1,212.3 856.6,212.6 860.0,213.1 863.1,213.7 866.0,214.3 868.6,215.1 870.9,216.0 872.9,217.0 874.6,218.0 876.0,219.1 877.0,220.3 877.6,221.5 877.9,222.8 882.9,297.6 882.8,299.2 882.4,300.8 881.7,302.4 880.6,304.0 879.2,305.5 877.4,307.1 875.4,308.5 873.1,310.0 870.5,311.3 867.6,312.6 864.5,313.8 861.3,314.9 857.8,315.9 854.1,316.8 850.4,317.6 846.5,318.2 842.6,318.8 838.6,319.1 834.6,319.4 830.7,319.5 826.7,319.5 822.9,319.3 819.2,319.0 815.6,318.5 812.2,318.0 808.9,317.3 805.9,316.4 803.1,315.5 800.6,314.4 798.4,313.3 796.4,312.0 794.8,310.7 793.5,309.3 792.5,307.9 791.8,306.3 791.5,304.8" fill="#000000"/>
</g>
<line x1="822" y1="111.5" x2="830.2" y2="228" stroke="#0808f4" stroke-width="1.1"/>
</svg>
<div class="a" style="left:270px;top:111px;width:1556px;height:1px;background:#0a0a0a;"></div>
<div class="a" style="left:270px;top:842px;width:1556px;height:1px;background:#0a0a0a;"></div>
<svg class="a" style="left:470px;top:856px" width="60" height="22" viewBox="470 856 60 22"><rect x="471.9" y="858.1" width="4.9" height="16.9" fill="#dcdcdc"/><rect x="480.2" y="858.1" width="5" height="16.9" fill="#dcdcdc"/><polygon points="511.2,858.3 518.7,866.6 511.2,874.9" fill="#a0a0a0"/><rect x="520.1" y="858.1" width="4.8" height="16.9" fill="#a0a0a0"/></svg>
<div class="t" style="left:535.40px;top:858px;font-size:15px;line-height:18px;height:18px;color:#d6d6d6;transform:scaleX(0.9594);transform-origin:0 0;">Steps:</div>
<div class="t" style="left:585.90px;top:858px;font-size:15px;line-height:18px;height:18px;color:#d6d6d6;">1</div>
<svg class="a" style="left:596px;top:867px" width="9" height="6"><polygon points="0.7,1.2 8.1,1.2 4.4,5.6" fill="#b8b8b8"/></svg>
<div class="t" style="left:615.60px;top:859px;font-size:15px;line-height:18px;height:18px;color:#d6d6d6;letter-spacing:-0.185px;">Real Time Factor:</div>
<div class="t" style="left:834.40px;top:859px;font-size:15px;line-height:18px;height:18px;color:#d6d6d6;letter-spacing:-0.234px;">Sim Time:</div>
<div class="t" style="left:1022.60px;top:859px;font-size:15px;line-height:18px;height:18px;color:#d6d6d6;letter-spacing:-0.298px;">Real Time:</div>
<div class="t" style="left:1215.40px;top:859px;font-size:15px;line-height:18px;height:18px;color:#d6d6d6;letter-spacing:0.314px;">Iterations:</div>
<div class="t" style="left:1407.60px;top:859px;font-size:15px;line-height:18px;height:18px;color:#d6d6d6;transform:scaleX(0.8487);transform-origin:0 0;">FPS:</div>
<div class="a" style="left:738px;top:857px;width:90px;height:19px;background:#757575;border-radius:3px;"></div>
<div class="t" style="left:740.60px;top:858px;font-size:15px;line-height:18px;height:18px;color:#3c3c3c;">0.99</div>
<div class="a" style="left:906px;top:857px;width:110px;height:19px;background:#757575;border-radius:3px;"></div>
<div class="t" style="left:906.40px;top:858px;font-size:15px;line-height:18px;height:18px;color:#3c3c3c;letter-spacing:-0.174px;">00 00:00:19.760</div>
<div class="a" style="left:1099px;top:857px;width:110px;height:19px;background:#757575;border-radius:3px;"></div>
<div class="t" style="left:1099.20px;top:858px;font-size:15px;line-height:18px;height:18px;color:#3c3c3c;letter-spacing:-0.174px;">00 00:00:20.027</div>
<div class="a" style="left:1291px;top:857px;width:110px;height:19px;background:#757575;border-radius:3px;"></div>
<div class="t" style="left:1293.40px;top:858px;font-size:15px;line-height:18px;height:18px;color:#3c3c3c;">19760</div>
<div class="a" style="left:1442px;top:857px;width:90px;height:19px;background:#757575;border-radius:3px;"></div>
<div class="t" style="left:1444.80px;top:858px;font-size:15px;line-height:18px;height:18px;color:#3c3c3c;">53.73</div>
<div class="a" style="left:1540px;top:850px;width:91px;height:33px;background:#4d4d4d;border-radius:2px;"></div>
<div class="t" style="left:1548.80px;top:858px;font-size:15px;line-height:18px;height:18px;color:#ebebeb;letter-spacing:-0.228px;">Reset Time</div>
</body>
</html>
